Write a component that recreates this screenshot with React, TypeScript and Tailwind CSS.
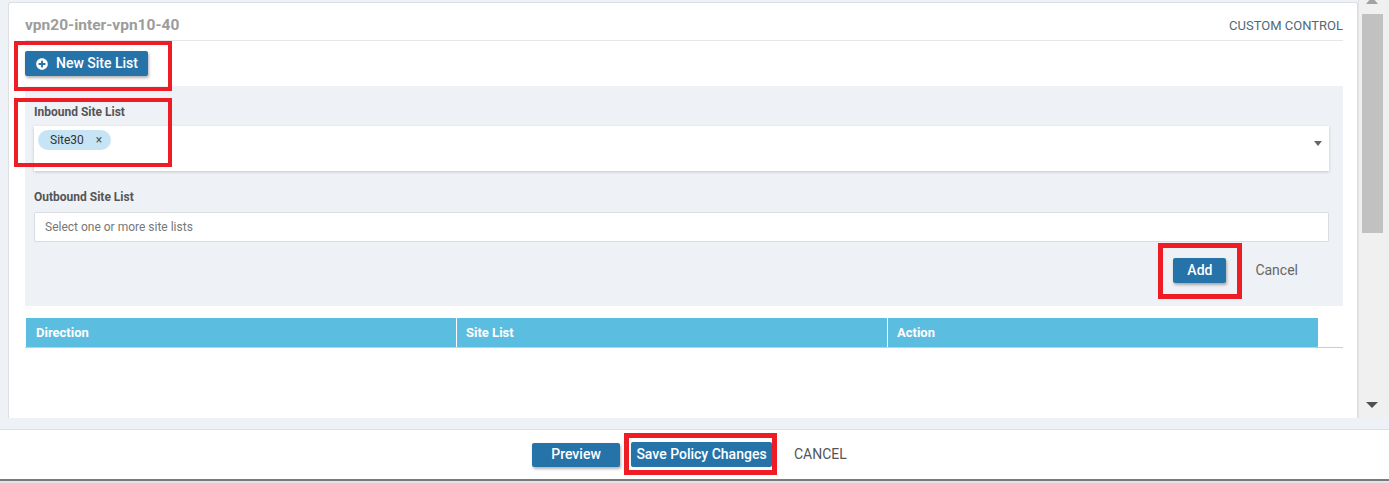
import { FaPlusCircle } from "react-icons/fa";

function Callout({ className }: { className: string }) {
  return <div className={`pointer-events-none absolute border-[#ee1c24] ${className}`} />;
}

export default function App() {
  return (
    <div className="relative flex h-[483px] w-[1389px] flex-col overflow-hidden bg-[#eef1f5] font-['Roboto',sans-serif]">
      {/* Scrollable card */}
      <div className="flex h-[418px] pl-[8px]">
        <div className="mt-[2px] flex flex-1 flex-col rounded-t-[3px] border border-b-0 border-[#dcdfe3] bg-white pl-[16px] pr-[14px]">
          {/* Title */}
          <div className="flex h-[38px] items-center justify-between border-b border-[#e3e6ea] pt-[8px]">
            <h2 className="text-[15.5px] font-bold text-[#9c9c9c]">vpn20-inter-vpn10-40</h2>
            <span className="text-[13px] text-[#4f6878]">CUSTOM CONTROL</span>
          </div>

          <div className="pt-[10px]">
            <button className="flex h-[25px] items-center gap-[8px] rounded-[2px] bg-[#2673aa] pl-[11px] pr-[10px] text-[14px] font-medium text-white shadow-[1px_2px_3px_rgba(0,0,0,0.3)]">
              <FaPlusCircle className="h-[12px] w-[12px]" />
              New Site List
            </button>
          </div>

          {/* Form */}
          <div className="mt-[10px] flex h-[220px] flex-col bg-[#eef1f5] pl-[9px] pr-[14px] pt-[17px]">
            <label className="text-[12px] font-bold text-[#555]">Inbound Site List</label>
            <div className="mt-[5px] flex h-[45px] items-start justify-between bg-white pl-[4px] pr-[7px] pt-[4px] shadow-[0_1px_3px_rgba(0,0,0,0.18)]">
              <span className="flex h-[20px] items-center gap-[12px] rounded-full bg-[#c6e4f4] pl-[12px] pr-[9px] text-[12px] text-[#333]">
                Site30
                <span className="text-[12px] leading-none text-[#555]">×</span>
              </span>
              <span className="mt-[11px] h-0 w-0 border-x-[4px] border-t-[5px] border-x-transparent border-t-[#666]" />
            </div>

            <label className="mt-[17px] text-[12px] font-bold text-[#555]">Outbound Site List</label>
            <div className="mt-[6px] flex h-[30px] items-center rounded-[2px] border border-[#dadde1] bg-white pl-[10px] text-[12px] text-[#777]">
              Select one or more site lists
            </div>

            <div className="mt-[16px] flex items-center justify-end gap-[29px] pr-[31px]">
              <button className="h-[25px] w-[53px] rounded-[2px] bg-[#2673aa] text-[14px] font-medium text-white shadow-[1px_2px_3px_rgba(0,0,0,0.3)]">
                Add
              </button>
              <span className="text-[14px] text-[#666]">Cancel</span>
            </div>
          </div>

          {/* Table */}
          <div className="mt-[12px] border-b border-[#c9cdd1]">
            <div className="ml-[1px] flex h-[29px] w-[1292px] bg-[#5bbddf] text-[13px] font-bold text-white">
              <div className="flex w-[431px] items-center border-r border-white pl-[10px]">Direction</div>
              <div className="flex w-[431px] items-center border-r border-white pl-[9px]">Site List</div>
              <div className="flex flex-1 items-center pl-[9px]">Action</div>
            </div>
          </div>
        </div>

        {/* Scrollbar */}
        <div className="relative w-[31px] border-l border-[#e2e2e2] bg-[#f0f0f0]">
          <span className="absolute left-[7px] top-[-3px] h-0 w-0 border-x-[6px] border-b-[7px] border-x-transparent border-b-[#a3a3a3]" />
          <div className="ml-[3px] mt-[14px] h-[219px] w-[21px] bg-[#c1c1c1]" />
          <span className="absolute left-[7px] top-[402px] h-0 w-0 border-x-[6px] border-t-[6px] border-x-transparent border-t-[#505050]" />
        </div>
      </div>

      {/* Footer */}
      <div className="mt-[11px] flex h-[50px] items-center gap-[11px] border-t border-[#dcdfe3] bg-white pl-[532px]">
        <button className="h-[24px] w-[88px] rounded-[2px] bg-[#2673aa] text-[14px] font-medium text-white shadow-[1px_2px_3px_rgba(0,0,0,0.3)]">
          Preview
        </button>
        <button className="h-[25px] w-[141px] rounded-[2px] bg-[#2673aa] text-[14px] font-medium text-white">
          Save Policy Changes
        </button>
        <span className="ml-[11px] text-[14px] text-[#555]">CANCEL</span>
      </div>
      <div className="h-[2px] bg-[#7a7a7a]" />
      <div className="flex-1 bg-[#e4e4e4]" />

      {/* Annotation boxes */}
      <Callout className="left-[14px] top-[41px] h-[50px] w-[158px] border-[4px]" />
      <Callout className="left-[14px] top-[98px] h-[69px] w-[158px] border-[4px]" />
      <Callout className="left-[1158px] top-[243px] h-[56px] w-[84px] border-[5px]" />
      <Callout className="left-[624px] top-[433px] h-[42px] w-[153px] border-[5px]" />
    </div>
  );
}
